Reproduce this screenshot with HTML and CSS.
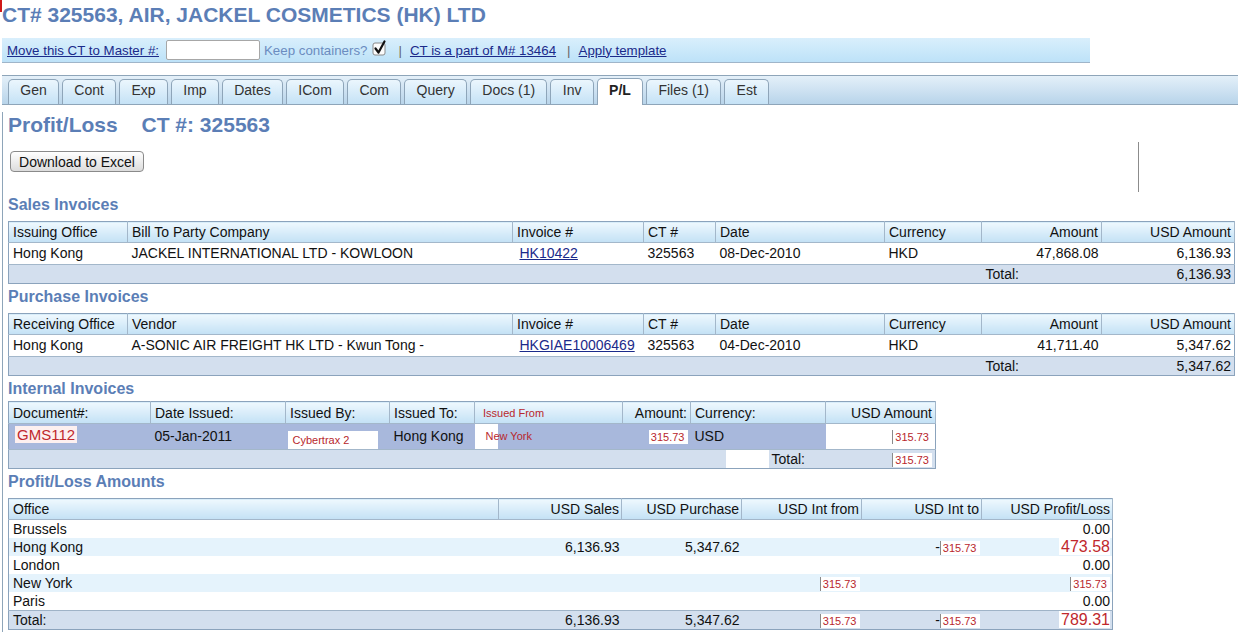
FILE: index.html
```html
<!DOCTYPE html>
<html>
<head>
<meta charset="utf-8">
<title>CT# 325563 Profit/Loss</title>
<link rel="stylesheet" href="styles.css">
</head>
<body>
<h1 class="page-title">CT# 325563, AIR, JACKEL COSMETICS (HK) LTD</h1>

<div class="toolbar">
  <a href="#" class="tlink">Move this CT to Master #:</a>
  <input class="master-input" type="text">
  <span class="keep">Keep containers?</span>
  <span class="check"><svg width="15" height="16" viewBox="0 0 15 16"><rect x="1" y="3" width="12" height="12" rx="2" fill="#fbfbfb" stroke="#8a8a8a"/><path d="M3.5 8.5 L6.5 12.5 L12.5 1.5" fill="none" stroke="#111" stroke-width="2.2" stroke-linecap="round" stroke-linejoin="round"/></svg></span>
  <span class="sep">|</span>
  <a href="#" class="tlink">CT is a part of M# 13464</a>
  <span class="sep">|</span>
  <a href="#" class="tlink">Apply template</a>
</div>

<div class="tabbar">
  <div class="tab">Gen</div>
  <div class="tab">Cont</div>
  <div class="tab">Exp</div>
  <div class="tab">Imp</div>
  <div class="tab">Dates</div>
  <div class="tab">ICom</div>
  <div class="tab">Com</div>
  <div class="tab">Query</div>
  <div class="tab">Docs (1)</div>
  <div class="tab">Inv</div>
  <div class="tab active">P/L</div>
  <div class="tab">Files (1)</div>
  <div class="tab">Est</div>
</div>

<div class="content">
  <h2 class="pl-title">Profit/Loss <span class="ct">CT #: 325563</span></h2>
  <button class="btn">Download to Excel</button>

  <h3 class="section">Sales Invoices</h3>
  <table class="grid inv">
    <colgroup><col style="width:119px"><col style="width:385px"><col style="width:131px"><col style="width:72px"><col style="width:169px"><col style="width:97px"><col style="width:120px"><col style="width:133px"></colgroup>
    <tr class="head"><th>Issuing Office</th><th>Bill To Party Company</th><th>Invoice #</th><th>CT #</th><th>Date</th><th>Currency</th><th class="r">Amount</th><th class="r">USD Amount</th></tr>
    <tr class="data"><td>Hong Kong</td><td>JACKEL INTERNATIONAL LTD - KOWLOON</td><td><a href="#" class="inv-link">HK10422</a></td><td>325563</td><td>08-Dec-2010</td><td>HKD</td><td class="r">47,868.08</td><td class="r">6,136.93</td></tr>
    <tr class="total"><td colspan="6"></td><td>Total:</td><td class="r">6,136.93</td></tr>
  </table>

  <h3 class="section">Purchase Invoices</h3>
  <table class="grid inv">
    <colgroup><col style="width:119px"><col style="width:385px"><col style="width:131px"><col style="width:72px"><col style="width:169px"><col style="width:97px"><col style="width:120px"><col style="width:133px"></colgroup>
    <tr class="head"><th>Receiving Office</th><th>Vendor</th><th>Invoice #</th><th>CT #</th><th>Date</th><th>Currency</th><th class="r">Amount</th><th class="r">USD Amount</th></tr>
    <tr class="data"><td>Hong Kong</td><td>A-SONIC AIR FREIGHT HK LTD - Kwun Tong -</td><td><a href="#" class="inv-link">HKGIAE10006469</a></td><td>325563</td><td>04-Dec-2010</td><td>HKD</td><td class="r">41,711.40</td><td class="r">5,347.62</td></tr>
    <tr class="total"><td colspan="6"></td><td>Total:</td><td class="r">5,347.62</td></tr>
  </table>

  <h3 class="section section-tight">Internal Invoices</h3>
  <table class="grid internal">
    <colgroup><col style="width:142px"><col style="width:135px"><col style="width:104px"><col style="width:85px"><col style="width:148px"><col style="width:68px"><col style="width:135px"><col style="width:110px"></colgroup>
    <tr class="head"><th>Document#:</th><th>Date Issued:</th><th>Issued By:</th><th>Issued To:</th><th class="from-h"><span class="red-s">Issued From</span></th><th class="r">Amount:</th><th>Currency:</th><th class="r">USD Amount</th></tr>
    <tr class="idata"><td><span class="gms">GMS112</span></td><td>05-Jan-2011</td><td><span class="cyber">Cybertrax 2</span></td><td>Hong Kong</td><td class="from-d"><span class="red-s">New York</span></td><td class="r"><span class="redbox">315.73</span></td><td>USD</td><td class="r white"><span class="redbox bar">315.73</span></td></tr>
    <tr class="itotal"><td colspan="6"></td><td class="tot-cell"><span class="blank"></span>Total:</td><td class="r"><span class="redbox bar">315.73</span></td></tr>
  </table>

  <h3 class="section">Profit/Loss Amounts</h3>
  <table class="grid pl">
    <colgroup><col style="width:490px"><col style="width:123px"><col style="width:120px"><col style="width:120px"><col style="width:120px"><col style="width:131px"></colgroup>
    <tr class="head"><th>Office</th><th class="r">USD Sales</th><th class="r">USD Purchase</th><th class="r">USD Int from</th><th class="r">USD Int to</th><th class="r">USD Profit/Loss</th></tr>
    <tr class="prow"><td>Brussels</td><td></td><td></td><td></td><td></td><td class="r">0.00</td></tr>
    <tr class="prow alt"><td>Hong Kong</td><td class="r">6,136.93</td><td class="r">5,347.62</td><td></td><td class="r">-<span class="redbox bar">315.73</span></td><td class="r"><span class="bigred">473.58</span></td></tr>
    <tr class="prow"><td>London</td><td></td><td></td><td></td><td></td><td class="r">0.00</td></tr>
    <tr class="prow alt"><td>New York</td><td></td><td></td><td class="r"><span class="redbox bar">315.73</span></td><td></td><td class="r"><span class="redbox bar">315.73</span></td></tr>
    <tr class="prow"><td>Paris</td><td></td><td></td><td></td><td></td><td class="r">0.00</td></tr>
    <tr class="ptotal"><td>Total:</td><td class="r">6,136.93</td><td class="r">5,347.62</td><td class="r"><span class="redbox bar">315.73</span></td><td class="r">-<span class="redbox bar">315.73</span></td><td class="r"><span class="bigred">789.31</span></td></tr>
  </table>
</div>
</body>
</html>
```

FILE: styles.css
```css
* { box-sizing: border-box; }
html, body { margin: 0; padding: 0; background: #fff; }
body {
  font-family: "Liberation Sans", Arial, Helvetica, sans-serif;
  font-size: 14px;
  color: #111;
  width: 1238px;
  height: 632px;
  overflow: hidden;
}

.page-title {
  position: relative;
  margin: 0;
  padding: 2px 0 0 2px;
  height: 28px;
  font-size: 21px;
  line-height: 26px;
  font-weight: bold;
  color: #5b7eb6;
}
.page-title::before {
  content: "";
  position: absolute;
  left: 0;
  top: 0;
  width: 2px;
  height: 12px;
  background: #d01818;
}

/* toolbar */
.toolbar {
  margin: 10px 0 0 2px;
  width: 1088px;
  height: 25px;
  display: flex;
  align-items: center;
  padding-left: 5px;
  background: linear-gradient(#d9effc, #bde2f8);
  border-bottom: 1px solid #9fb5c9;
  font-size: 13.3px;
}
.tlink { color: #1b2a8a; text-decoration: underline; }
.master-input {
  width: 94px;
  height: 20px;
  margin: 0 0 0 7px;
  padding: 0;
  border: 1px solid #a7a7a7;
  border-radius: 2px;
  background: #fff;
}
.keep { color: #6b8cc0; margin-left: 4px; }
.check { margin-left: 5px; display: inline-flex; margin-top: -4px; }
.sep { color: #666; margin: 0 8px 0 11px; }

/* tabs */
.tabbar {
  margin: 12px 0 0 2px;
  height: 30px;
  display: flex;
  align-items: flex-end;
  gap: 3px;
  padding-left: 6px;
  border-top: 1px solid #8ea5b9;
  border-bottom: 1px solid #8ea5b9;
  background: linear-gradient(#e4f0f9, #b8d4ea);
}
.tab {
  height: 25px;
  padding: 0 11.3px;
  line-height: 21px;
  font-size: 14px;
  color: #333;
  border: 1px solid #8ea5b9;
  border-bottom: none;
  border-radius: 5px 5px 0 0;
  background: linear-gradient(#ebf6fd, #c5e2f6);
}
.tab.active {
  height: 27px;
  margin-bottom: -1px;
  background: #fff;
  font-weight: bold;
  color: #222;
  line-height: 22px;
}

/* content */
.content {
  position: relative;
  margin-left: 2px;
  padding-left: 5px;
  border-left: 1px solid #8ea5b9;
  height: 530px;
}
.content::after {
  content: "";
  position: absolute;
  left: 1135px;
  top: 30px;
  width: 1px;
  height: 50px;
  background: #8c8c8c;
}
.pl-title {
  margin: 7px 0 0 0;
  font-size: 21px;
  line-height: 26px;
  font-weight: bold;
  color: #5b7eb6;
}
.pl-title .ct { margin-left: 18px; }

.btn {
  display: block;
  margin: 13px 0 0 2px;
  width: 134px;
  height: 21px;
  padding: 0;
  font-family: "Liberation Sans", Arial, sans-serif;
  font-size: 14px;
  color: #111;
  border: 1px solid #8a8a8a;
  border-radius: 4px;
  background: linear-gradient(#ffffff, #dcdcdc);
}

.section {
  margin: 23px 0 6px 0;
  font-size: 16px;
  line-height: 20px;
  font-weight: bold;
  color: #5b7eb6;
}
.grid + .section { margin-top: 3px; }
.section-tight { margin-bottom: 2px; }

/* tables */
.grid {
  border-collapse: collapse;
  table-layout: fixed;
  border: 1px solid #8ba3bc;
}
.grid th, .grid td {
  padding: 0 3px 0 4px;
  text-align: left;
  font-weight: normal;
  white-space: nowrap;
  overflow: hidden;
}
.grid .r { text-align: right; }
.grid tr.head th {
  line-height: 20px;
  background: linear-gradient(#eef8fe, #c3e1f5);
  border-right: 1px solid #a3b7ca;
  border-bottom: 1px solid #a3b7ca;
  color: #111;
}
.inv { width: 1226px; }
.inv tr.data td { line-height: 21px; }
.inv-link { color: #1b2a8a; text-decoration: underline; margin-left: 3px; }
.grid tr.total td {
  line-height: 18px;
  background: #d3dfee;
  border-top: 1px solid #a3b7ca;
}

/* internal */
.internal { width: 927px; }
.internal th.from-h { background: #fff; }
.red-s { color: #b8272d; font-size: 11px; }
.internal th.from-h .red-s { margin-left: 4px; }
.internal tr.idata td { line-height: 25px; background: #a8b8dc; }
.internal tr.idata td.from-d {
  background: linear-gradient(to right, #fff 23px, #a8b8dc 23px);
  vertical-align: top;
  line-height: 22px;
}
.internal tr.idata td.from-d .red-s { margin-left: 7px; }
.internal tr.idata td.white { background: #fff; }
.gms {
  display: inline-block;
  margin-left: 2px;
  padding: 0 2px;
  font-size: 15px;
  line-height: 17px;
  color: #c0282d;
  background: #fdf0f0;
  vertical-align: 1px;
}
.cyber {
  display: inline-block;
  width: 90px;
  margin-left: -2px;
  padding-left: 5px;
  font-size: 11px;
  line-height: 18px;
  color: #b8272d;
  background: #fff;
  vertical-align: -3px;
}
.internal tr.itotal td {
  line-height: 18px;
  background: #d3dfee;
  border-top: 1px solid #a3b7ca;
}
.internal tr.itotal td.tot-cell { padding-left: 35px; }
.blank {
  display: inline-block;
  width: 43px;
  height: 18px;
  margin-right: 3px;
  background: #fff;
  vertical-align: top;
}

.redbox {
  display: inline-block;
  padding: 0 3px 0 2px;
  font-size: 11px;
  line-height: 14px;
  color: #b8272d;
  background: #fff;
  vertical-align: middle;
}
.redbox.bar { border-left: 1px solid #8a8a8a; }

/* p/l */
.pl { width: 1104px; }
.pl tr.prow td { line-height: 18px; background: #fff; }
.pl tr.prow.alt td { background: #e5f3fc; }
.pl tr.ptotal td {
  line-height: 17px;
  background: #d3dfee;
  border-top: 1px solid #9fb3c7;
}
.pl td.r, .pl th.r { padding-right: 2px; }
.bigred {
  display: inline-block;
  font-size: 16px;
  line-height: 17px;
  color: #c0282d;
  background: #fff;
  padding-left: 2px;
}
```
